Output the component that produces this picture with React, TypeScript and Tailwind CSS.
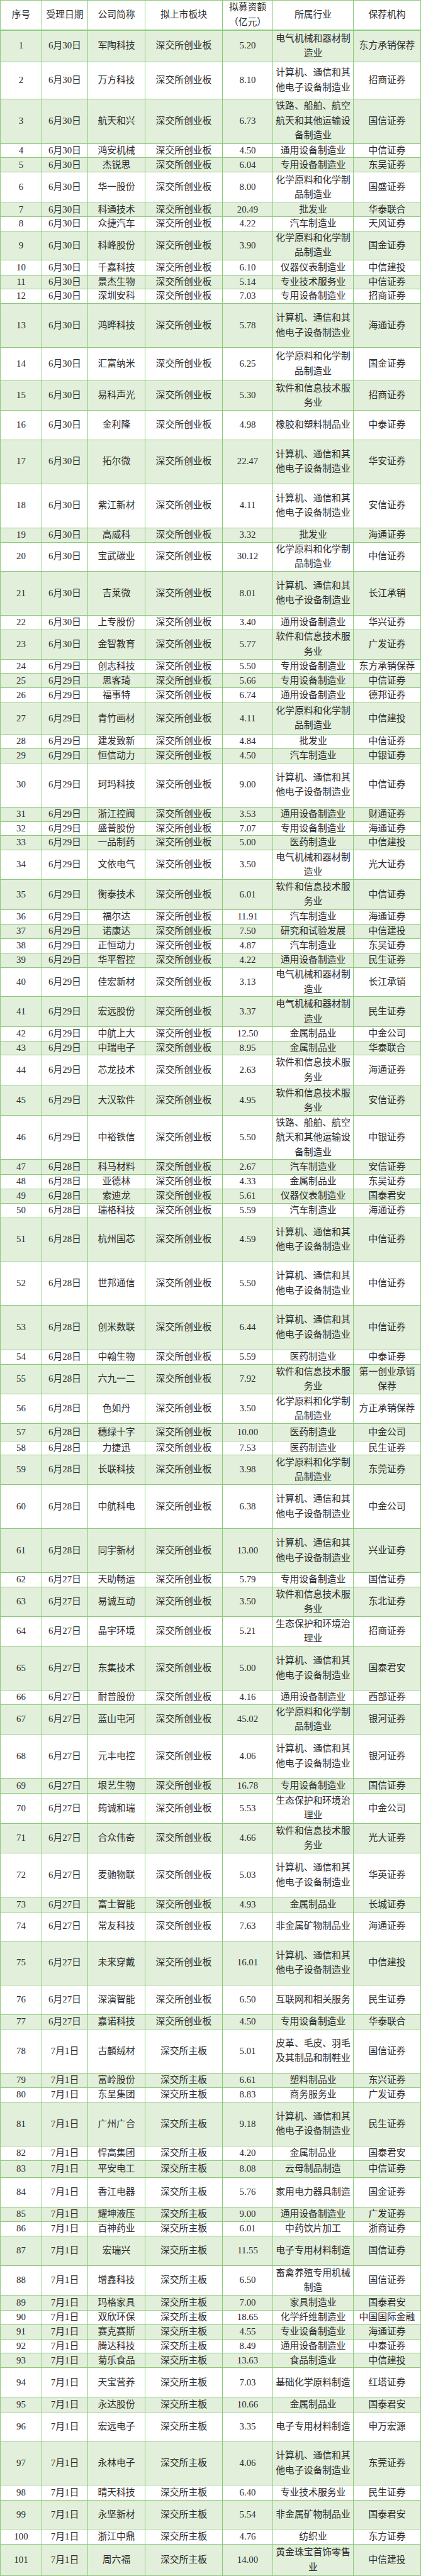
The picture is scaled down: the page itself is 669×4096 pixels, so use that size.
import React from 'react';

// 行底边位置（参考图坐标），用来算每行高度
const BOTTOMS = [
  50, 102.3, 164.3, 238.3, 262.3, 286, 337.3, 360, 384, 432.7, 457.3, 481, 505, 578.3, 633.3,
  683.3, 731.7, 805, 878.3, 902.3, 950.7, 1024, 1048.3, 1097.3, 1121, 1145, 1170, 1221.7, 1246,
  1270, 1343.3, 1367.3, 1391, 1415, 1464.3, 1514, 1538, 1562.3, 1586.3, 1610.7, 1659.3, 1709,
  1733.3, 1756.7, 1807.3, 1857.3, 1930.7, 1955, 1979, 2003.3, 2027.3, 2100.7, 2173.3, 2247.3,
  2271.7, 2321, 2370, 2399, 2422.7, 2471.7, 2545, 2618.3, 2642.3, 2691.7, 2741, 2814.3, 2838.3,
  2887.7, 2961, 2985.7, 3036, 3085.7, 3159, 3183.3, 3231.7, 3305, 3354.3, 3378.3, 3451.7,
  3475.7, 3500, 3573.3, 3597.3, 3626, 3675, 3699, 3723.3, 3772.7, 3821.7, 3846.7, 3870.7, 3895,
  3918.3, 3942.3, 3991.7, 4016, 4065, 4138.3, 4162.7, 4211.7, 4236.7, 4289,
];
const SCALE = 0.955;

const C = '计算机、通信和其\n他电子设备制造业';
const H = '化学原料和化学制\n品制造业';
const S = '软件和信息技术服\n务业';
const E = '电气机械和器材制\n造业';
const T = '铁路、船舶、航空\n航天和其他运输设\n备制造业';
const G = '生态保护和环境治\n理业';

// 日期|公司|金额|行业|保荐
const RAW: [string, string, string, string, string][] = [
  ['6月30日', '军陶科技', '5.20', E, '东方承销保荐'],
  ['6月30日', '万方科技', '8.10', C, '招商证券'],
  ['6月30日', '航天和兴', '6.73', T, '国信证券'],
  ['6月30日', '鸿安机械', '4.50', '通用设备制造业', '中信证券'],
  ['6月30日', '杰锐思', '6.04', '专用设备制造业', '东吴证券'],
  ['6月30日', '华一股份', '8.00', H, '国盛证券'],
  ['6月30日', '科通技术', '20.49', '批发业', '华泰联合'],
  ['6月30日', '众捷汽车', '4.22', '汽车制造业', '天风证券'],
  ['6月30日', '科峰股份', '3.90', H, '国金证券'],
  ['6月30日', '千嘉科技', '6.10', '仪器仪表制造业', '中信建投'],
  ['6月30日', '景杰生物', '5.14', '专业技术服务业', '中信证券'],
  ['6月30日', '深圳安科', '7.03', '专用设备制造业', '招商证券'],
  ['6月30日', '鸿晔科技', '5.78', C, '海通证券'],
  ['6月30日', '汇富纳米', '6.25', H, '国金证券'],
  ['6月30日', '易科声光', '5.30', S, '招商证券'],
  ['6月30日', '金利隆', '4.98', '橡胶和塑料制品业', '中泰证券'],
  ['6月30日', '拓尔微', '22.47', C, '华安证券'],
  ['6月30日', '紫江新材', '4.11', C, '安信证券'],
  ['6月30日', '高威科', '3.32', '批发业', '海通证券'],
  ['6月30日', '宝武碳业', '30.12', H, '中信证券'],
  ['6月30日', '吉莱微', '8.01', C, '长江承销'],
  ['6月30日', '上专股份', '3.40', '通用设备制造业', '华兴证券'],
  ['6月30日', '金智教育', '5.77', S, '广发证券'],
  ['6月29日', '创志科技', '5.50', '专用设备制造业', '东方承销保荐'],
  ['6月29日', '思客琦', '5.66', '专用设备制造业', '中信证券'],
  ['6月29日', '福事特', '6.74', '通用设备制造业', '德邦证券'],
  ['6月29日', '青竹画材', '4.11', H, '中信建投'],
  ['6月29日', '建发致新', '4.84', '批发业', '中信证券'],
  ['6月29日', '恒信动力', '4.50', '汽车制造业', '中银证券'],
  ['6月29日', '珂玛科技', '9.00', C, '中信证券'],
  ['6月29日', '浙江控阀', '3.53', '通用设备制造业', '财通证券'],
  ['6月29日', '盛普股份', '7.07', '专用设备制造业', '海通证券'],
  ['6月29日', '一品制药', '5.00', '医药制造业', '中信建投'],
  ['6月29日', '文依电气', '3.50', E, '光大证券'],
  ['6月29日', '衡泰技术', '6.01', S, '中信证券'],
  ['6月29日', '福尔达', '11.91', '汽车制造业', '海通证券'],
  ['6月29日', '诺康达', '7.50', '研究和试验发展', '中信建投'],
  ['6月29日', '正恒动力', '4.87', '汽车制造业', '东吴证券'],
  ['6月29日', '华平智控', '4.22', '通用设备制造业', '民生证券'],
  ['6月29日', '佳宏新材', '3.13', E, '长江承销'],
  ['6月29日', '宏远股份', '3.37', E, '民生证券'],
  ['6月29日', '中航上大', '12.50', '金属制品业', '中金公司'],
  ['6月29日', '中瑞电子', '8.95', '金属制品业', '华泰联合'],
  ['6月29日', '芯龙技术', '2.63', S, '海通证券'],
  ['6月29日', '大汉软件', '4.95', S, '安信证券'],
  ['6月29日', '中裕铁信', '5.50', T, '中银证券'],
  ['6月28日', '科马材料', '2.67', '汽车制造业', '安信证券'],
  ['6月28日', '亚德林', '4.33', '金属制品业', '东吴证券'],
  ['6月28日', '索迪龙', '5.61', '仪器仪表制造业', '国泰君安'],
  ['6月28日', '瑞格科技', '5.59', '汽车制造业', '海通证券'],
  ['6月28日', '杭州国芯', '4.59', C, '中信证券'],
  ['6月28日', '世邦通信', '5.50', C, '中信证券'],
  ['6月28日', '创米数联', '6.44', C, '中信证券'],
  ['6月28日', '中翰生物', '5.59', '医药制造业', '中泰证券'],
  ['6月28日', '六九一二', '7.92', S, '第一创业承销\n保荐'],
  ['6月28日', '色如丹', '3.50', H, '方正承销保荐'],
  ['6月28日', '穗绿十字', '10.00', '医药制造业', '中金公司'],
  ['6月28日', '力捷迅', '7.53', '医药制造业', '民生证券'],
  ['6月28日', '长联科技', '3.98', H, '东莞证券'],
  ['6月28日', '中航科电', '6.38', C, '中金公司'],
  ['6月28日', '同宇新材', '13.00', C, '兴业证券'],
  ['6月27日', '天助畅运', '5.79', '专用设备制造业', '国信证券'],
  ['6月27日', '易诚互动', '3.50', S, '东北证券'],
  ['6月27日', '晶宇环境', '5.21', G, '招商证券'],
  ['6月27日', '东集技术', '5.00', C, '国泰君安'],
  ['6月27日', '耐普股份', '4.16', '通用设备制造业', '西部证券'],
  ['6月27日', '蓝山屯河', '45.02', H, '银河证券'],
  ['6月27日', '元丰电控', '4.06', C, '银河证券'],
  ['6月27日', '垠艺生物', '16.78', '专用设备制造业', '国信证券'],
  ['6月27日', '筠诚和瑞', '5.53', G, '中金公司'],
  ['6月27日', '合众伟奇', '4.66', S, '光大证券'],
  ['6月27日', '麦驰物联', '5.03', C, '华英证券'],
  ['6月27日', '富士智能', '4.93', '金属制品业', '长城证券'],
  ['6月27日', '常友科技', '7.63', '非金属矿物制品业', '海通证券'],
  ['6月27日', '未来穿戴', '16.01', C, '中信建投'],
  ['6月27日', '深演智能', '6.50', '互联网和相关服务', '民生证券'],
  ['6月27日', '嘉诺科技', '4.50', '专用设备制造业', '华泰联合'],
  ['7月1日', '古麟绒材', '5.01', '皮革、毛皮、羽毛\n及其制品和制鞋业', '国信证券'],
  ['7月1日', '富岭股份', '6.61', '塑料制品业', '东兴证券'],
  ['7月1日', '东呈集团', '8.83', '商务服务业', '广发证券'],
  ['7月1日', '广州广合', '9.18', C, '民生证券'],
  ['7月1日', '悍高集团', '4.20', '金属制品业', '国泰君安'],
  ['7月1日', '平安电工', '8.08', '云母制品制造', '中信证券'],
  ['7月1日', '香江电器', '5.76', '家用电力器具制造', '国金证券'],
  ['7月1日', '耀坤液压', '9.00', '通用设备制造业', '广发证券'],
  ['7月1日', '百神药业', '6.01', '中药饮片加工', '浙商证券'],
  ['7月1日', '宏瑞兴', '11.55', '电子专用材料制造', '国信证券'],
  ['7月1日', '增鑫科技', '6.50', '畜禽养殖专用机械\n制造', '国信证券'],
  ['7月1日', '玛格家具', '7.00', '家具制造业', '国泰君安'],
  ['7月1日', '双欣环保', '18.65', '化学纤维制造业', '中国国际金融'],
  ['7月1日', '赛克赛斯', '4.55', '专业设备制造业', '海通证券'],
  ['7月1日', '腾达科技', '8.49', '通用设备制造业', '中泰证券'],
  ['7月1日', '菊乐食品', '13.63', '食品制造业', '中信建投'],
  ['7月1日', '天宝营养', '7.03', '基础化学原料制造', '红塔证券'],
  ['7月1日', '永达股份', '10.66', '金属制品业', '国泰君安'],
  ['7月1日', '宏远电子', '3.35', '电子专用材料制造', '申万宏源'],
  ['7月1日', '永林电子', '4.06', C, '东莞证券'],
  ['7月1日', '晴天科技', '6.40', '专业技术服务业', '民生证券'],
  ['7月1日', '永坚新材', '5.54', '非金属矿物制品业', '国泰君安'],
  ['7月1日', '浙江中鼎', '4.76', '纺织业', '东方证券'],
  ['7月1日', '周六福', '14.00', '黄金珠宝首饰零售\n业', '中信建投'],
];

const WIDTHS = ['w-[66px]', 'w-[73px]', 'w-[91px]', 'w-[123px]', 'w-[80px]', 'w-[128px]', 'w-[107px]'];
const HEADERS = ['序号', '受理日期', '公司简称', '拟上市板块', '拟募资额\n（亿元）', '所属行业', '保荐机构'];

function Cell({ i, children }: { i: number; children: React.ReactNode }) {
  return (
    <div
      className={`${WIDTHS[i]} shrink-0 flex items-center justify-center text-center whitespace-pre-line leading-[23.5px] border-r border-b border-[#8cc97a]`}
    >
      {children}
    </div>
  );
}

export default function App() {
  const rows = RAW.map((r, idx) => {
    const no = idx + 1;
    const board = no <= 77 ? '深交所创业板' : '深交所主板';
    return [String(no), r[0], r[1], board, r[2], r[3], r[4]];
  });

  return (
    <div className="w-[669px] bg-white border-l border-t border-[#8cc97a] text-[14.8px] text-[#2b2b2b] font-['Liberation_Serif','Noto_Sans_CJK_SC',serif]">
      <div className="flex border-b border-[#8cc97a]" style={{ height: BOTTOMS[0] * SCALE }}>
        {HEADERS.map((h, i) => (
          <Cell key={i} i={i}>
            {h}
          </Cell>
        ))}
      </div>
      {rows.map((cells, idx) => (
        <div
          key={idx}
          className={`flex ${idx % 2 === 0 ? 'bg-[#e2efda]' : 'bg-white'}`}
          style={{ height: (BOTTOMS[idx + 1] - BOTTOMS[idx]) * SCALE }}
        >
          {cells.map((c, i) => (
            <Cell key={i} i={i}>
              {c}
            </Cell>
          ))}
        </div>
      ))}
    </div>
  );
}
